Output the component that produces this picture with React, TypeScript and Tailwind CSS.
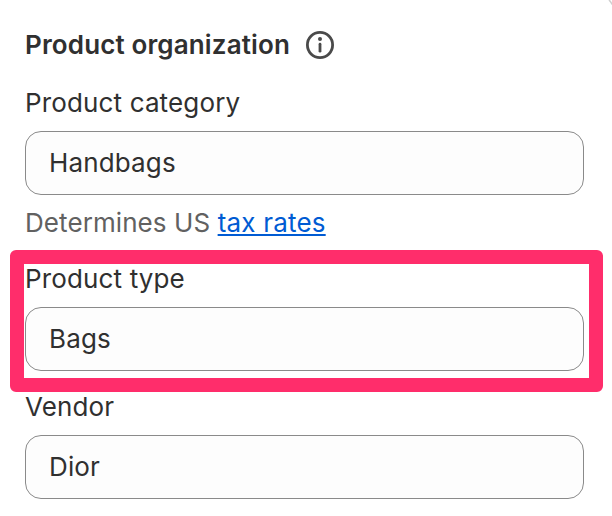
function Field({ label, value }: { label: string; value: string }) {
  return (
    <div className="flex flex-col">
      <div className="flex h-10 items-center leading-10">{label}</div>
      <div className="mt-2 flex h-16 items-center rounded-[16px] border border-[#8a8a8a] bg-[#fdfdfd] px-[23px] pb-0.5">{value}</div>
    </div>
  );
}

export default function App() {
  return (
    <main className="relative h-[516px] w-[612px] overflow-hidden bg-white pl-[25px] pr-7 pt-[25px] font-['Inter',sans-serif] text-[26px] tracking-[0.14px] text-[#303030]">
      <svg className="absolute right-0 top-0" width="4" height="5" viewBox="0 0 4 5" fill="none" stroke="#cfcfcf" strokeWidth="1.5">
        <path d="M1 0Q3 2 4 4.5" />
      </svg>
      <header className="flex h-10 items-center gap-4">
        <h1 className="pb-0.5 text-[26px] font-semibold">Product organization</h1>
        <svg width="28" height="28" viewBox="0 0 28 28" fill="none" stroke="#4a4a4a" strokeWidth="2.8" strokeLinecap="round">
          <circle cx="14" cy="14" r="12.6" />
          <path d="M14 13.2v7" />
          <circle cx="14" cy="8" r="2" fill="#4a4a4a" stroke="none" />
        </svg>
      </header>
      <div className="mt-[18px]">
        <Field label="Product category" value="Handbags" />
      </div>
      <p className="mt-2 h-10 leading-10 tracking-[0.08px] text-[#616161]">
        Determines US <a className="tracking-[0.2px] text-[#005bd3] underline">tax rates</a>
      </p>
      <section className="-mx-[15px] mt-[7px] h-[142px] w-[593px] rounded-md border-[14px] border-[#ff2d6b]">
        <div className="-mt-[5px] ml-px w-[559px]">
          <Field label="Product type" value="Bags" />
        </div>
      </section>
      <div className="-mt-[5px]">
        <Field label="Vendor" value="Dior" />
      </div>
    </main>
  );
}
